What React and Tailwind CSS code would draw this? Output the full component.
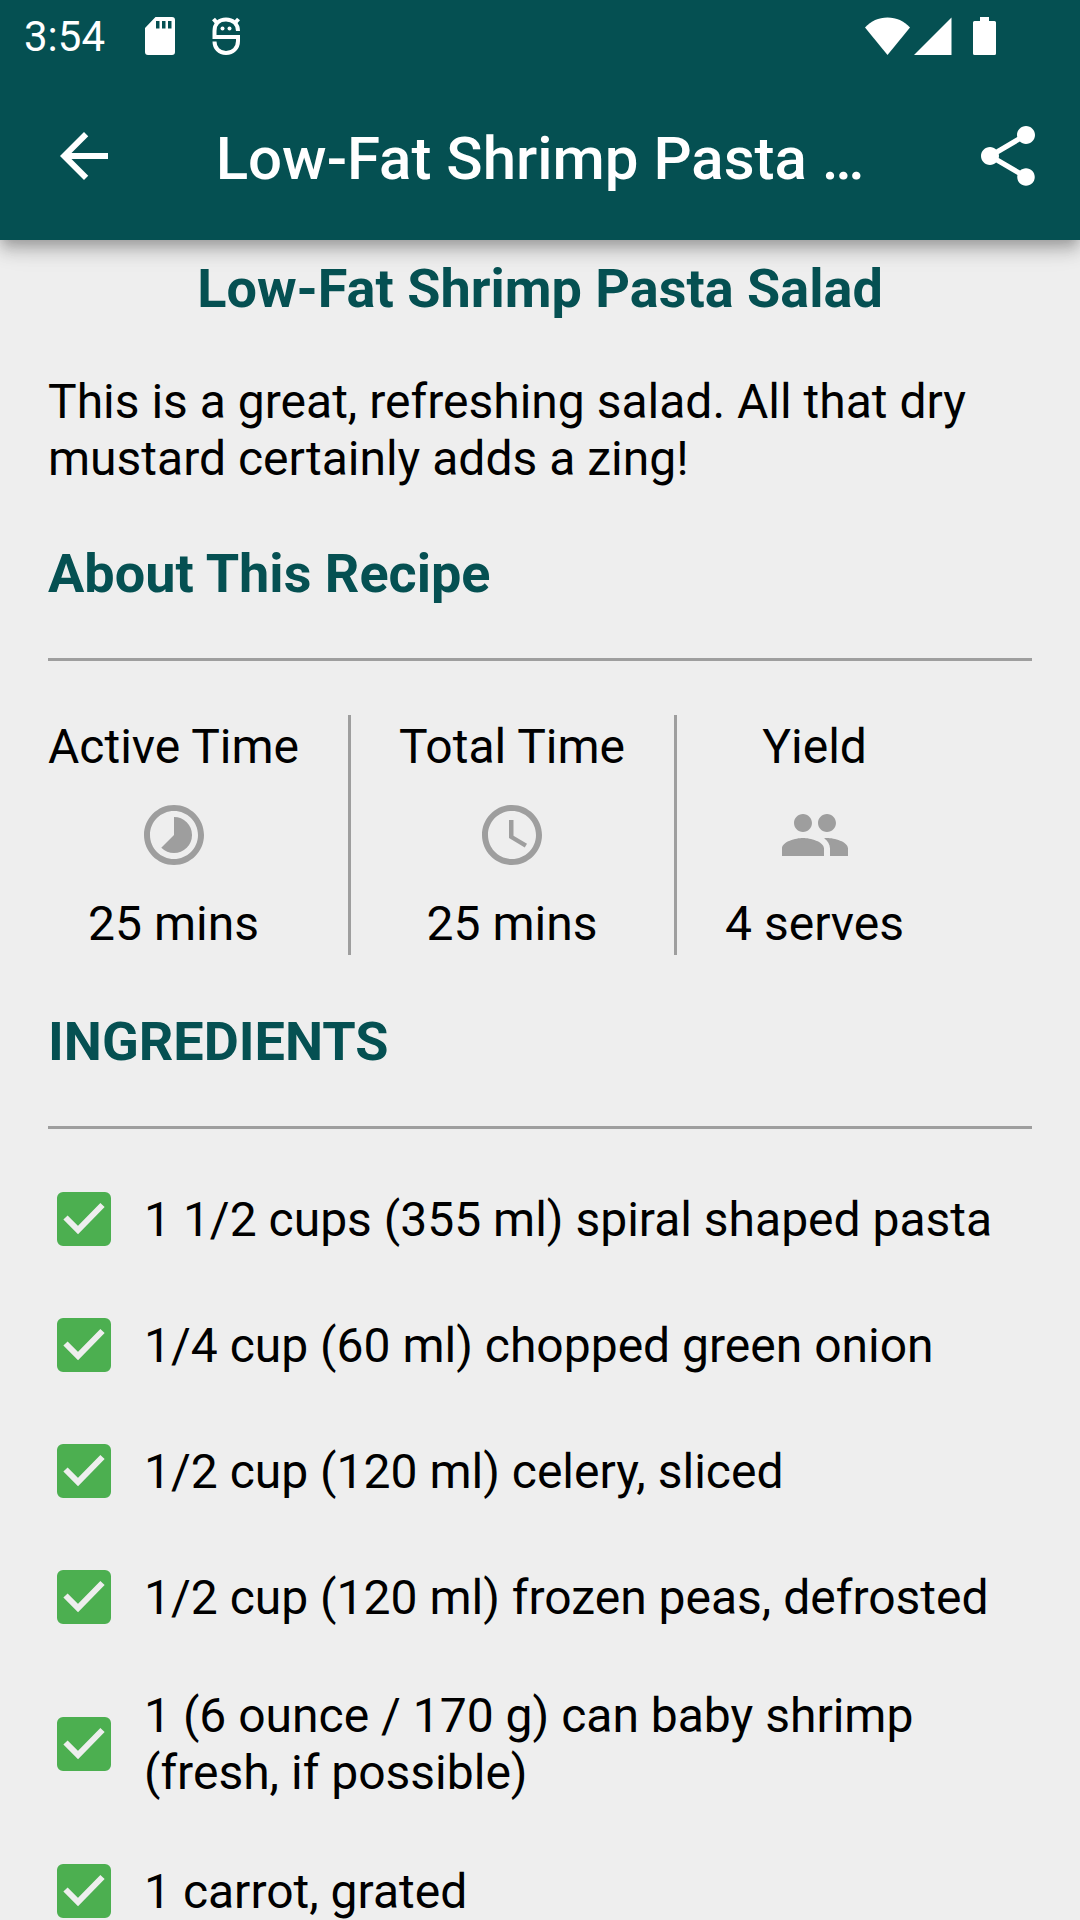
import { useState } from "react";
import {
  MdArrowBack,
  MdShare,
  MdTimelapse,
  MdAccessTime,
  MdPeople,
} from "react-icons/md";

const stats = [
  { label: "Active Time", value: "25 mins", Icon: MdTimelapse },
  { label: "Total Time", value: "25 mins", Icon: MdAccessTime },
  { label: "Yield", value: "4 serves", Icon: MdPeople },
];

const ingredients = [
  "1 1/2 cups (355 ml) spiral shaped pasta",
  "1/4 cup (60 ml) chopped green onion",
  "1/2 cup (120 ml) celery, sliced",
  "1/2 cup (120 ml) frozen peas, defrosted",
  "1 (6 ounce / 170 g) can baby shrimp (fresh, if possible)",
  "1 carrot, grated",
];

function StatusBar() {
  return (
    <div className="flex h-[72px] items-center pr-[84px] pl-6">
      <span className="pt-[2px] text-[42px] leading-[48px]">3:54</span>
      <svg className="ml-[39px] h-10 w-8" viewBox="0 0 32 40" fill="currentColor">
        <path
          fillRule="evenodd"
          d="M11.500 1H28a3 3 0 0 1 3 3v32a3 3 0 0 1-3 3H4a3 3 0 0 1-3-3V12zM12 5v7.500h3.500V5zM18 5v7.500h3.500V5zM24 5v7.500h3.500V5z"
        />
      </svg>
      <svg
        className="ml-[34px] h-10 w-8"
        viewBox="0 0 32 40"
        fill="none"
        stroke="currentColor"
        strokeWidth="4"
      >
        <path d="M28 15C28 8 23 3.500 16 3.500S4.500 8 4.500 15V21H28V25C28 32 23 37 16 37S4.500 32 4.500 25.500" />
        <path d="M3.500 3l4 4.500M28.500 3l-4 4.500" />
        <circle cx="12.500" cy="12.500" r="2" fill="currentColor" stroke="none" />
        <circle cx="19.500" cy="12.500" r="2" fill="currentColor" stroke="none" />
      </svg>
      <div className="ml-auto flex items-center">
        <svg className="h-10 w-[46px]" viewBox="0 0 46 40" fill="currentColor">
          <path d="M1 11.500C7 5 14.500 1.500 23.500 1.500S40 5 46 11.500L23.500 39z" />
        </svg>
        <svg className="ml-[3px] h-10 w-10" viewBox="0 0 40 40" fill="currentColor">
          <path d="M38.500 1.500V39H1z" />
        </svg>
        <svg className="ml-[19px] h-10 w-6" viewBox="0 0 24 40" fill="currentColor">
          <path d="M8 1h9v4H22.500a1.500 1.500 0 0 1 1.500 1.500v31A1.500 1.500 0 0 1 22.500 39H2.500a1.500 1.500 0 0 1-1.500-1.500v-31A1.500 1.500 0 0 1 2.500 5h5.500z" />
        </svg>
      </div>
    </div>
  );
}

function AppBar({ title }) {
  return (
    <div className="flex h-[168px] items-center justify-between pr-9 pl-12">
      <button type="button" aria-label="Back" className="shrink-0">
        <MdArrowBack className="size-[72px]" />
      </button>
      <h1 className="pt-[6px] pr-3 text-center text-[60px] leading-[72px] font-medium">
        {title}
      </h1>
      <button type="button" aria-label="Share" className="shrink-0">
        <MdShare className="size-[72px]" />
      </button>
    </div>
  );
}

function SectionTitle({ children }) {
  return (
    <h2 className="border-b-[3px] border-[#9e9e9e] pb-[51px] text-[54px] leading-[66px] font-bold text-[#055052]">
      {children}
    </h2>
  );
}

function Ingredient({ text }) {
  const [checked, setChecked] = useState(true);

  return (
    <li>
      <label className="flex items-center gap-6 py-[27px]">
        <span className="grid size-[72px] shrink-0 place-items-center">
          <input
            type="checkbox"
            checked={checked}
            onChange={(e) => setChecked(e.target.checked)}
            className="peer col-start-1 row-start-1 size-[54px] appearance-none rounded-md border-[6px] border-[#757575] checked:border-[#4caf50] checked:bg-[#4caf50]"
          />
          <svg
            className="pointer-events-none col-start-1 row-start-1 size-[54px] opacity-0 peer-checked:opacity-100"
            viewBox="0 0 54 54"
            fill="none"
            stroke="#eeeeee"
            strokeWidth="6"
          >
            <path d="M8.500 25.500L21 38L45.500 13" />
          </svg>
        </span>
        <span>{text}</span>
      </label>
    </li>
  );
}

export default function App() {
  return (
    <div className="h-screen overflow-hidden bg-[#eeeeee] font-[Roboto,sans-serif] text-[48px] leading-[57px] text-black">
      <header className="relative bg-[#055052] text-white shadow-[0_6px_12px_-3px_rgba(0,0,0,0.2),0_12px_15px_0_rgba(0,0,0,0.14),0_3px_30px_0_rgba(0,0,0,0.12)]">
        <StatusBar />
        <AppBar title="Low-Fat Shrimp Pasta …" />
      </header>

      <main className="px-12 pt-4">
        <h2 className="text-center text-[54px] leading-[66px] font-bold text-[#055052]">
          Low-Fat Shrimp Pasta Salad
        </h2>
        <p className="mt-[51px] mb-[54px]">
          This is a great, refreshing salad. All that dry mustard certainly adds
          a zing!
        </p>

        <SectionTitle>About This Recipe</SectionTitle>
        <div className="my-[54px] flex h-[240px] divide-x-[3px] divide-[#9e9e9e]">
          {stats.map(({ label, value, Icon }) => (
            <div
              key={label}
              className="flex flex-col items-center justify-center gap-6 pr-[49px] pl-12 first:pl-0"
            >
              <span>{label}</span>
              <Icon className="size-[72px] text-[#9e9e9e]" />
              <span>{value}</span>
            </div>
          ))}
        </div>

        <SectionTitle>INGREDIENTS</SectionTitle>
        <ul className="pt-[27px]">
          {ingredients.map((text) => (
            <Ingredient key={text} text={text} />
          ))}
        </ul>
      </main>
    </div>
  );
}
